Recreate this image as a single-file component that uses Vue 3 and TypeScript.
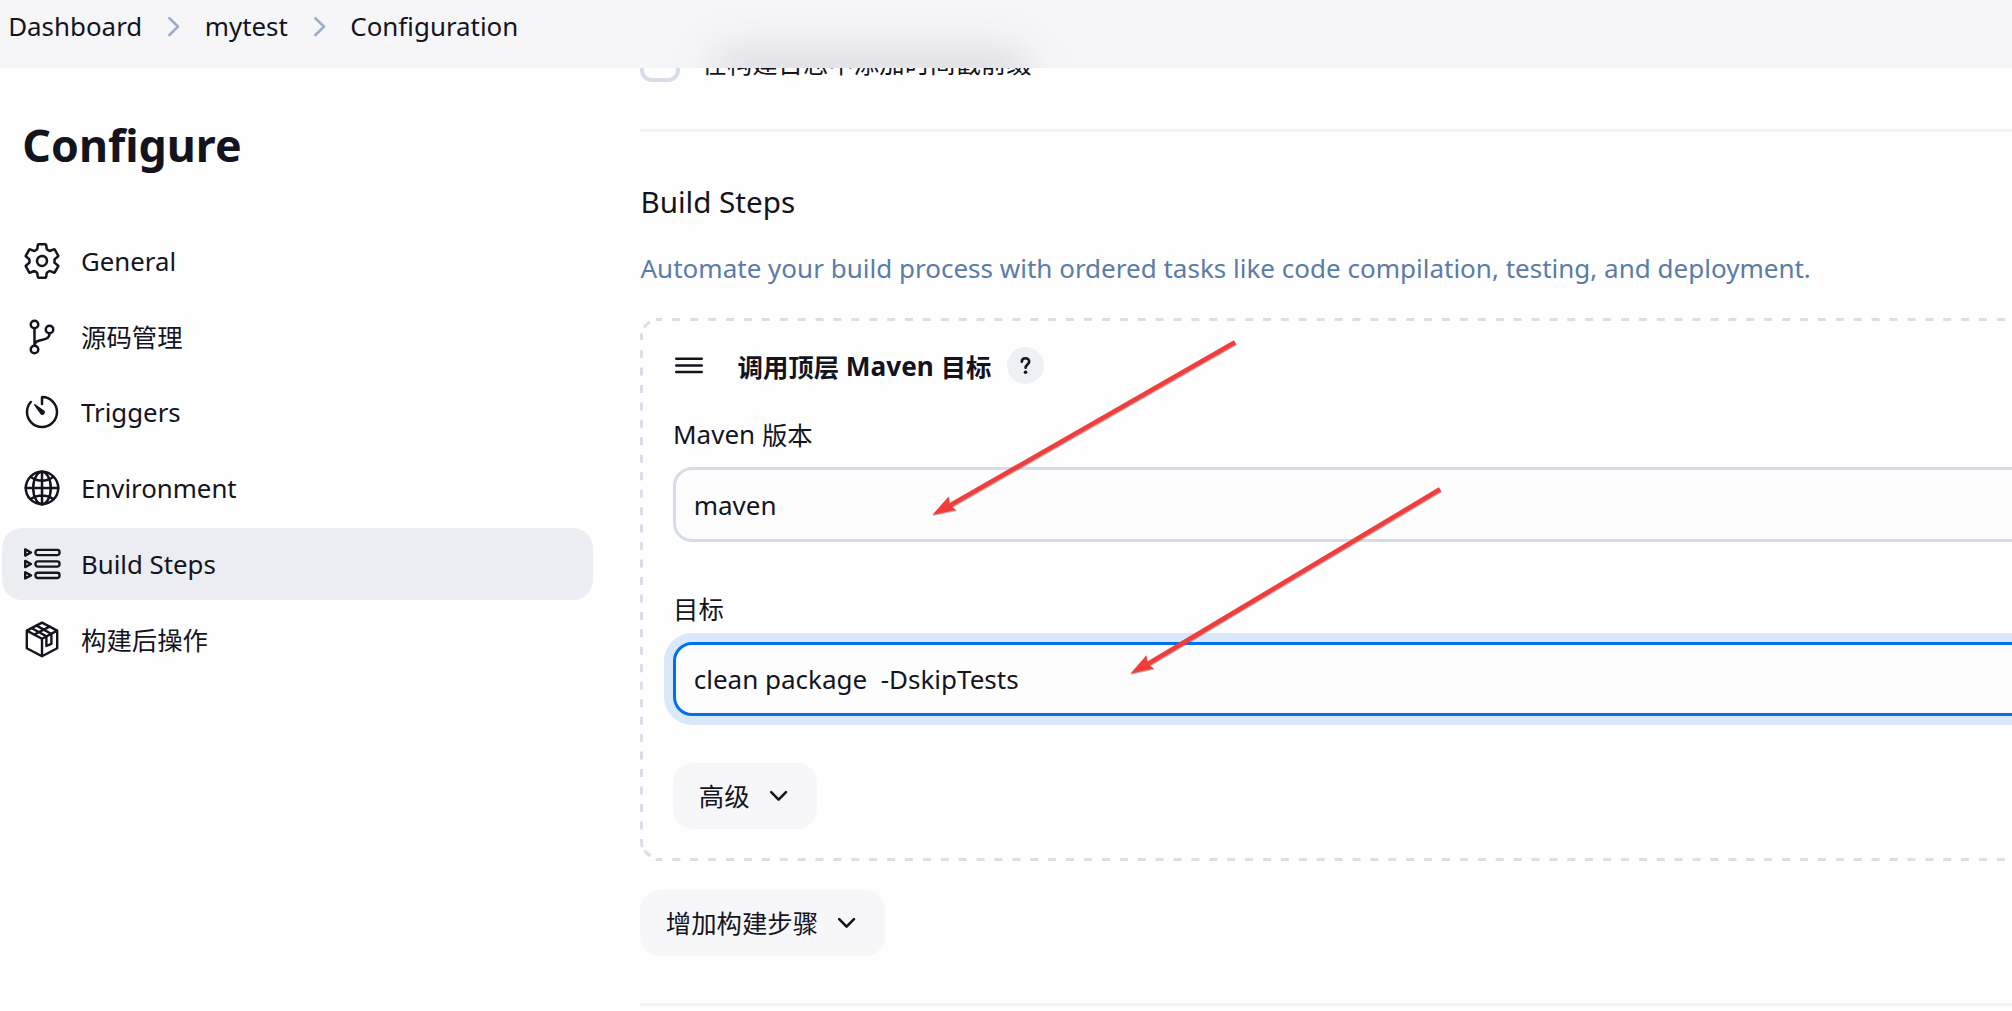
<script setup lang="ts">
import { ref } from 'vue'

type IconName = 'gear' | 'branch' | 'timer' | 'globe' | 'steps' | 'package'

interface NavItem {
  label: string
  icon: IconName
  zh?: boolean
}

const crumbs: string[] = ['Dashboard', 'mytest', 'Configuration']

const navItems: NavItem[] = [
  { label: 'General', icon: 'gear' },
  { label: '源码管理', icon: 'branch', zh: true },
  { label: 'Triggers', icon: 'timer' },
  { label: 'Environment', icon: 'globe' },
  { label: 'Build Steps', icon: 'steps' },
  { label: '构建后操作', icon: 'package', zh: true },
]

const active = ref('Build Steps')
const mavenVersion = ref('maven')
const goals = ref('clean package  -DskipTests')
</script>

<template>
  <div class="page">
    <div class="layout">
      <aside class="side">
        <h1>Configure</h1>
        <nav>
          <a
            v-for="item in navItems"
            :key="item.label"
            class="item"
            :class="{ active: item.label === active }"
            @click="active = item.label"
          >
            <svg v-if="item.icon === 'gear'" class="icon" viewBox="0 0 512 512">
              <path d="M262.29 192.31a64 64 0 1057.4 57.4 64.13 64.13 0 00-57.4-57.4zM416.39 256a154.34 154.34 0 01-1.53 20.79l45.21 35.46a10.81 10.81 0 012.45 13.75l-42.77 74a10.81 10.81 0 01-13.14 4.59l-44.9-18.08a16.11 16.11 0 00-15.17 1.75A164.48 164.48 0 01325 400.8a15.94 15.94 0 00-8.82 12.14l-6.73 47.89a11.08 11.08 0 01-10.68 9.17h-85.54a11.11 11.11 0 01-10.69-8.87l-6.72-47.82a16.07 16.07 0 00-9-12.22 155.3 155.3 0 01-21.46-12.57 16 16 0 00-15.11-1.71l-44.89 18.07a10.81 10.81 0 01-13.14-4.58l-42.77-74a10.8 10.8 0 012.45-13.75l38.21-30a16.05 16.05 0 006-14.08c-.36-4.17-.58-8.33-.58-12.5s.21-8.27.58-12.35a16 16 0 00-6.07-13.94l-38.19-30A10.81 10.81 0 0149.48 186l42.77-74a10.81 10.81 0 0113.14-4.59l44.9 18.08a16.11 16.11 0 0015.17-1.75A164.48 164.48 0 01187 111.2a15.94 15.94 0 008.82-12.14l6.73-47.89A11.08 11.08 0 01213.23 42h85.54a11.11 11.11 0 0110.69 8.87l6.72 47.82a16.07 16.07 0 009 12.22 155.3 155.3 0 0121.46 12.57 16 16 0 0015.11 1.71l44.89-18.07a10.81 10.81 0 0113.14 4.58l42.77 74a10.8 10.8 0 01-2.45 13.75l-38.21 30a16.05 16.05 0 00-6.05 14.08c.33 4.14.55 8.3.55 12.47z" />
            </svg>
            <svg v-else-if="item.icon === 'branch'" class="icon" viewBox="0 0 512 512">
              <circle cx="160" cy="96" r="48" />
              <circle cx="160" cy="416" r="48" />
              <circle cx="352" cy="160" r="48" />
              <path d="M160 368V144M352 208c0 128-192 48-192 160" />
            </svg>
            <svg v-else-if="item.icon === 'timer'" class="icon" viewBox="0 0 512 512">
              <path d="M112.91 128A191.85 191.85 0 0064 254c-1.18 106.35 85.65 193.8 192 194 106.2.2 192-85.83 192-192 0-104.54-83.55-189.61-187.5-192a4.36 4.36 0 00-4.5 4.37V152" />
              <path class="solid" d="M233.38 278.63l-79-113a8.13 8.13 0 0111.32-11.32l113 79a32.5 32.5 0 01-37.25 53.26 33.21 33.21 0 01-8.07-7.94z" />
            </svg>
            <svg v-else-if="item.icon === 'globe'" class="icon" viewBox="0 0 512 512">
              <circle cx="256" cy="256" r="208" />
              <path d="M256 48c-58.07 0-112.67 93.13-112.67 208S197.93 464 256 464s112.67-93.13 112.67-208S314.07 48 256 48z" />
              <path d="M117.33 117.33c38.24 27.15 86.38 43.34 138.67 43.34s100.43-16.19 138.67-43.34M394.67 394.67c-38.24-27.15-86.38-43.34-138.67-43.34s-100.43 16.19-138.67 43.34M256 48v416M464 256H48" />
            </svg>
            <svg v-else-if="item.icon === 'steps'" class="icon fine" viewBox="0 0 40 40">
              <g v-for="y in [8.5, 20, 31.4]" :key="y" :transform="`translate(0 ${y})`">
                <path d="M3.2-3.1V3.1L9 0z" />
                <rect x="13.5" y="-2.6" width="24" height="5.2" rx="2.2" />
              </g>
            </svg>
            <svg v-else class="icon fine" viewBox="0 0 40 40">
              <path d="M20 3.6L35.2 11.6V29.2L20 37.2 4.8 29.2V11.6zM4.8 11.6L20 19.7 35.2 11.6M20 19.7V37.2" />
              <path d="M9.8 9.2L24.4 17.3V27L29.4 24.8V15L14.7 6.6M12.3 15.5L27.6 7.6" />
            </svg>
            <span :class="{ zh: item.zh }">{{ item.label }}</span>
          </a>
        </nav>
      </aside>

      <main class="main">
        <div class="check-row">
          <span class="checkbox"></span>
          <span class="check-label"><span class="zh">在构建日志中添加时间戳前缀</span></span>
        </div>
        <div class="rule first"></div>

        <h2>Build Steps</h2>
        <p class="desc">Automate your build process with ordered tasks like code compilation, testing, and deployment.</p>

        <section class="card">
          <svg class="dashes" width="1400" height="543">
            <path d="M15.7 1.5H22M32.3 1.5H1400" stroke-dasharray="8 9.9" />
            <path d="M15.7 541.5H22M32.3 541.5H1400" stroke-dasharray="8 9.9" />
            <path d="M1.5 32H1.5V522" stroke-dasharray="8 9.46" />
            <path d="M1.5 15.6V22M1.5 521V525Q1.6 527 2.4 529M4 9.5Q6 6 10 4M4.6 532.4Q7 536 10.4 537.8" />
          </svg>

          <div class="card-head">
            <svg class="grip" viewBox="0 0 28 20">
              <path d="M1.2 3.8H26.8M1.2 10.5H26.8M1.2 17H26.8" />
            </svg>
            <span class="card-title"><span class="zh">调用顶层</span> Maven <span class="zh">目标</span></span>
            <span class="help">
              <svg viewBox="0 0 37 37">
                <path d="M14.8 14.7c0-2.2 1.7-3.5 3.7-3.5s3.7 1.3 3.7 3.4c0 2.9-3.6 3-3.6 6.2" />
                <circle cx="18.5" cy="25.3" r="1.8" />
              </svg>
            </span>
          </div>

          <label class="label">Maven <span class="zh">版本</span></label>
          <input v-model="mavenVersion" class="field" type="text" />

          <label class="label second"><span class="zh">目标</span></label>
          <input v-model="goals" class="field focused" type="text" />

          <button class="btn advanced" type="button">
            <span class="zh">高级</span>
            <svg class="chev" viewBox="0 0 20 20"><path d="M2.2 6.2L9.6 13.6 17 6.2" /></svg>
          </button>
        </section>

        <button class="btn add" type="button">
          <span class="zh">增加构建步骤</span>
          <svg class="chev" viewBox="0 0 20 20"><path d="M2.2 6.2L9.6 13.6 17 6.2" /></svg>
        </button>
        <div class="rule last"></div>
      </main>
    </div>

    <header class="topbar">
      <template v-for="(c, i) in crumbs" :key="c">
        <svg v-if="i > 0" class="sep" viewBox="0 0 62.5 40"><path d="M27.4 12.2L36 20.6 27.4 29" /></svg>
        <span class="crumb">{{ c }}</span>
      </template>
    </header>

    <!-- Annotation arrows pointing at the two fields -->
    <svg class="arrows" width="2012" height="1011">
      <g class="shade" transform="translate(0.8 1)">
        <path d="M1235 342.3L948 506.5" />
        <path class="tip" d="M932.3 515L948.6 496.5 949.8 505.3 956.2 510z" />
        <path d="M1440 489.3L1146 665" />
        <path class="tip" d="M1130.3 673.8L1146.4 655.2 1147.6 664 1154 668.5z" />
      </g>
      <g>
        <path d="M1235 342.3L948 506.5" />
        <path class="tip" d="M932.3 515L948.6 496.5 949.8 505.3 956.2 510z" />
        <path d="M1440 489.3L1146 665" />
        <path class="tip" d="M1130.3 673.8L1146.4 655.2 1147.6 664 1154 668.5z" />
      </g>
    </svg>
  </div>
</template>

<style>
body {
  margin: 0;
  background: #fefefe;
}
</style>

<style scoped>
.page {
  position: relative;
  width: 2012px;
  height: 1011px;
  overflow: hidden;
  background: #fefefe;
  color: #14141f;
  font-family: "Noto Sans", "Noto Sans CJK SC", sans-serif;
  font-size: 26px;
  line-height: 40px;
}
.layout {
  display: flex;
  height: 1011px;
}
.zh {
  font-size: 25.4px;
  line-height: 0;
  vertical-align: -1px;
}

/* Top bar, floats over the scrolled content */
.topbar {
  position: absolute;
  top: 0;
  left: 0;
  right: 0;
  height: 68px;
  box-sizing: border-box;
  padding: 6px 0 0 8.2px;
  display: flex;
  align-items: flex-start;
  overflow: hidden;
  background: #f6f6f9;
}
/* Soft smudge of the row that has scrolled behind the bar */
.topbar::after {
  content: "";
  position: absolute;
  left: 715px;
  top: 50px;
  width: 310px;
  height: 44px;
  background: rgba(40, 36, 48, 0.12);
  filter: blur(21px);
}
.crumb {
  font-size: 25.9px;
  white-space: nowrap;
}
.sep {
  width: 62.5px;
  height: 40px;
  fill: none;
  stroke: #9badc8;
  stroke-width: 2.6;
  stroke-linecap: round;
  stroke-linejoin: round;
}

/* Sidebar */
.side {
  flex: none;
  width: 640px;
  box-sizing: border-box;
  padding: 114.7px 47px 0 2px;
}
h1 {
  margin: 0 0 0 20.3px;
  font-size: 44.7px;
  line-height: 60px;
  font-weight: 700;
}
nav {
  display: flex;
  flex-direction: column;
  gap: 3.6px;
  margin-top: 50.7px;
}
.item {
  display: flex;
  align-items: center;
  gap: 19px;
  height: 72px;
  padding-left: 20px;
  border-radius: 20px;
  font-size: 25.8px;
  cursor: pointer;
}
.item:nth-child(3) {
  height: 71.2px;
  margin-bottom: 0.8px;
}
.item.active {
  background: #ecedf3;
}
.item .zh {
  font-size: 25.4px;
  line-height: 40px;
  padding-top: 1px;
}
.icon {
  width: 40px;
  height: 40px;
  fill: none;
  stroke: currentColor;
  stroke-width: 32;
  stroke-linecap: round;
  stroke-linejoin: round;
}
.icon.fine {
  stroke-width: 2.4;
}
.icon .solid {
  fill: currentColor;
  stroke: none;
}

/* Main column */
.main {
  flex: none;
  width: 1430px;
  display: flex;
  flex-direction: column;
  align-items: flex-start;
}
.check-row {
  display: flex;
  align-items: center;
  gap: 21.5px;
  height: 40px;
  margin-top: 42px;
}
.checkbox {
  width: 40px;
  height: 40px;
  box-sizing: border-box;
  border: 4px solid #d8dee8;
  border-radius: 12px;
}
.check-label {
  white-space: nowrap;
}
.rule {
  width: 100%;
  height: 3px;
  background: #f2f2f7;
}
.rule.first {
  margin-top: 47px;
}
.rule.last {
  margin-top: 47px;
}
h2 {
  margin: 49.5px 0 0 0.4px;
  font-size: 29.6px;
  font-weight: 400;
}
.desc {
  margin: 26.7px 0 0 0.5px;
  color: #5a7ca5;
  font-size: 26.03px;
  white-space: nowrap;
}

/* Build step card */
.card {
  position: relative;
  display: flex;
  flex-direction: column;
  align-items: flex-start;
  box-sizing: border-box;
  width: 100%;
  height: 543px;
  margin-top: 29.8px;
  padding: 29px 0 0 33px;
}
.dashes {
  position: absolute;
  top: 0;
  left: 0;
  fill: none;
  stroke: #d8dfe9;
  stroke-width: 3;
}
.card-head {
  display: flex;
  align-items: center;
  height: 37px;
}
.grip {
  width: 28px;
  height: 20px;
  margin-left: 2px;
  fill: none;
  stroke: #14141f;
  stroke-width: 2.4;
  stroke-linecap: round;
}
.card-title {
  width: 255px;
  margin: 0 14.5px 0 34.5px;
  padding-top: 1.5px;
  font-size: 26.2px;
  font-weight: 700;
  white-space: nowrap;
}
.help {
  display: flex;
  width: 37px;
  height: 37px;
  box-sizing: border-box;
  border-radius: 50%;
  background: #edf1f5;
}
.help svg {
  width: 37px;
  height: 37px;
  fill: none;
  stroke: #14141f;
  stroke-width: 2.6;
  stroke-linecap: round;
}
.help circle {
  fill: #14141f;
  stroke: none;
}
.label {
  height: 40px;
  margin: 30.3px 0 12.7px;
}
.label.second {
  margin: 46.5px 0 13.5px;
}
.field {
  width: 1390px;
  height: 75px;
  box-sizing: border-box;
  padding: 1px 17px 0 17.7px;
  border: 3px solid #d6dde8;
  border-radius: 19px;
  background: #fdfdfd;
  color: inherit;
  font: inherit;
  outline: none;
}
.field.focused {
  height: 74px;
  padding-top: 0;
  border-color: #0071eb;
  box-shadow: 0 0 0 9px #d9e9f9;
}
.btn {
  display: flex;
  align-items: center;
  gap: 19px;
  height: 66px;
  padding: 0 28px 0 25.8px;
  border: 0;
  border-radius: 20px;
  background: #f7f7fa;
  color: inherit;
  font: inherit;
}
.btn .zh {
  font-size: 25.4px;
  line-height: 40px;
  padding-top: 1px;
}
.btn.advanced {
  margin-top: 47px;
}
.btn.add {
  margin-top: 29px;
}
.chev {
  width: 20px;
  height: 20px;
  fill: none;
  stroke: #14141f;
  stroke-width: 2.6;
  stroke-linecap: round;
  stroke-linejoin: round;
}

.arrows {
  position: absolute;
  top: 0;
  left: 0;
  pointer-events: none;
  fill: none;
  stroke: #f23d3d;
  stroke-width: 4.6;
}
.arrows .tip {
  fill: #f23d3d;
  stroke: none;
}
.arrows .shade {
  opacity: 0.45;
  stroke: #6b5a5a;
}
.arrows .shade .tip {
  fill: #6b5a5a;
}
</style>
